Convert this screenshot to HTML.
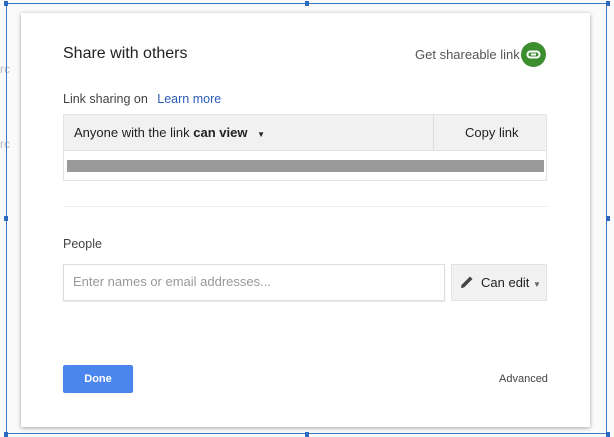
<!DOCTYPE html>
<html><head><style>
body{margin:0;width:614px;height:436px;background:#fafafa;font-family:"Liberation Sans",sans-serif;position:relative;overflow:hidden}
.a{position:absolute}
.frame{left:6px;top:3px;width:601px;height:431px;border:1px solid #3b78c8;box-sizing:border-box}
.h{width:4px;height:5px;background:#2a6ac0}
.dlg{left:21px;top:13px;width:569px;height:414px;background:#fff;box-shadow:0 1px 4px rgba(0,0,0,.35)}
</style></head><body>
<div class="a" style="left:0;top:62px;color:#bbb;font-size:12px">rc</div>
<div class="a" style="left:0;top:137px;color:#bbb;font-size:12px">rc</div>
<div class="a dlg"></div>
<div class="a frame"></div>
<div class="a h" style="left:4px;top:1px"></div><div class="a h" style="left:305px;top:1px"></div><div class="a h" style="left:606px;top:1px"></div>
<div class="a h" style="left:4px;top:216px"></div><div class="a h" style="left:606px;top:216px"></div>
<div class="a h" style="left:4px;top:432px"></div><div class="a h" style="left:305px;top:432px"></div><div class="a h" style="left:606px;top:432px"></div>
<div class="a" style="left:63px;top:45px;font-size:16px;color:#222">Share with others</div>
<div class="a" style="left:415px;top:47px;font-size:13px;color:#555">Get shareable link</div>
<div class="a" style="left:521px;top:42px;width:25px;height:25px;border-radius:50%;background:#3d8e2e"></div>
<svg class="a" style="left:525px;top:47px" width="17" height="15" viewBox="0 0 17 15"><rect x="2.5" y="4.5" width="12" height="6" rx="3" fill="none" stroke="#fff" stroke-width="2"/><line x1="6" y1="7.5" x2="11" y2="7.5" stroke="#fff" stroke-width="2"/></svg>
<div class="a" style="left:63px;top:92px;font-size:12.5px;color:#444">Link sharing on <span style="color:#2b5bb5;margin-left:6px">Learn more</span></div>
<div class="a" style="left:63px;top:114px;width:484px;height:67px;border:1px solid #e3e3e3;box-sizing:border-box"></div>
<div class="a" style="left:64px;top:115px;width:482px;height:35px;background:#f1f1f1;border-bottom:1px solid #e3e3e3"></div>
<div class="a" style="left:433px;top:115px;width:1px;height:35px;background:#ddd"></div>
<div class="a" style="left:74px;top:125px;font-size:13px;color:#222">Anyone with the link <b>can view</b> <span style="font-size:8px;margin-left:6px">▼</span></div>
<div class="a" style="left:465px;top:125px;font-size:13px;color:#222">Copy link</div>
<div class="a" style="left:67px;top:160px;width:477px;height:12px;background:#9a9a9a"></div>
<div class="a" style="left:63px;top:206px;width:484px;height:1px;background:#ececec"></div>
<div class="a" style="left:63px;top:237px;font-size:12.5px;color:#444">People</div>
<div class="a" style="left:63px;top:264px;width:382px;height:37px;border:1px solid #ddd;box-shadow:0 1px 1px rgba(0,0,0,.1);box-sizing:border-box"></div>
<div class="a" style="left:73px;top:274px;font-size:13px;color:#999">Enter names or email addresses...</div>
<div class="a" style="left:451px;top:264px;width:96px;height:37px;background:#f1f1f1;border:1px solid #e3e3e3;box-sizing:border-box"></div>
<svg class="a" style="left:460px;top:275px" width="14" height="14" viewBox="0 0 14 14"><path d="M1 13 L1.5 10 L10 1.5 L12.5 4 L4 12.5 Z" fill="#444"/></svg>
<div class="a" style="left:481px;top:275px;font-size:13px;color:#222">Can edit <span style="font-size:8px;color:#666">▼</span></div>
<div class="a" style="left:63px;top:365px;width:70px;height:28px;background:#4a86ee;border-radius:2px;color:#fff;font-size:11px;font-weight:bold;text-align:center;line-height:28px">Done</div>
<div class="a" style="left:499px;top:373px;font-size:11px;color:#444">Advanced</div>
</body></html>
